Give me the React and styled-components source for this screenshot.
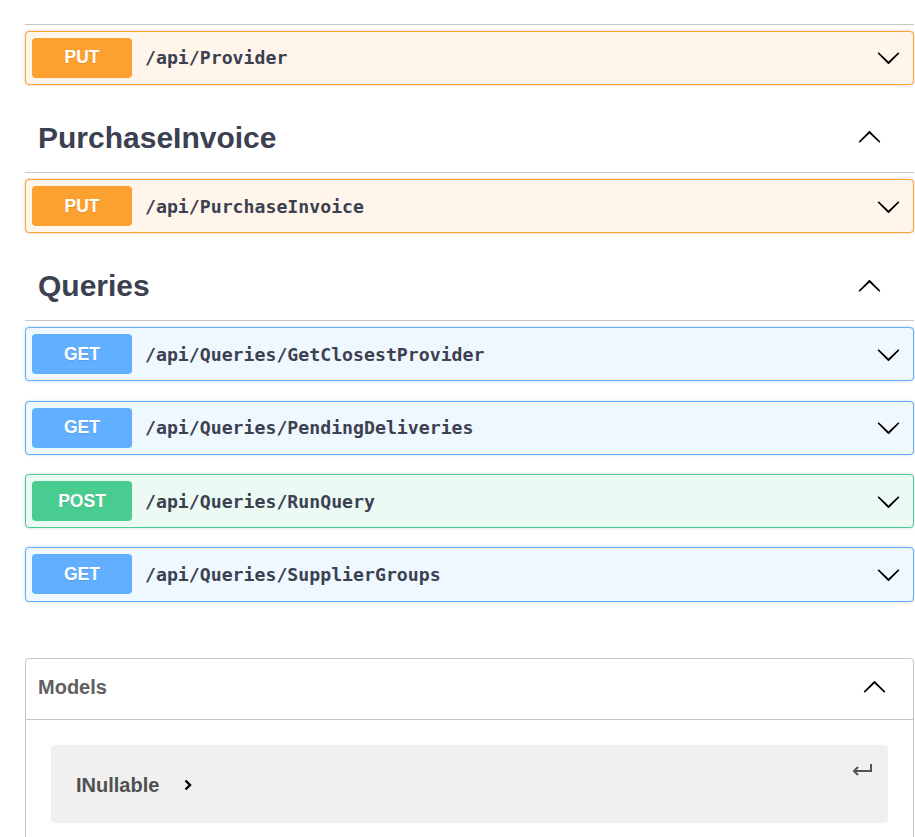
import React from 'react';
import styled, {createGlobalStyle} from 'styled-components';

const GlobalStyle = createGlobalStyle`
  html, body {
    margin: 0;
    padding: 0;
    background: #fff;
    overflow: hidden;
  }
  body {
    font-family: "Liberation Sans", Arial, sans-serif;
    color: #3b4151;
  }
`;

const methodColors = {
  PUT: {main: '#fca130', bg: '#fff5ea'},
  GET: {main: '#61affe', bg: '#eff7ff'},
  POST: {main: '#49cc90', bg: '#ecfaf4'},
};

const Page = styled.div`
  width: 889px;
  margin: -44px 0 0 25px;
`;

const TagSection = styled.section`
  display: flex;
  flex-direction: column;
`;

const TagHeading = styled.h3`
  display: flex;
  align-items: center;
  justify-content: space-between;
  box-sizing: border-box;
  height: 68.5px;
  margin: 0 0 6.3px;
  padding: 0 32px 0 13px;
  border-bottom: 1px solid rgba(59, 65, 81, 0.3);
  font-size: 30px;
  font-weight: 700;
  color: #3b4151;
`;

const Block = styled.div`
  display: flex;
  align-items: center;
  box-sizing: border-box;
  height: 54.3px;
  margin-bottom: 19.1px;
  padding: 0 12px 0 6px;
  border: 1px solid ${p => methodColors[p.$method].main};
  border-radius: 4px;
  background: ${p => methodColors[p.$method].bg};
  box-shadow: 0 0 3px rgba(0, 0, 0, 0.19);
`;

const Method = styled.span`
  display: flex;
  align-items: center;
  justify-content: center;
  width: 100px;
  height: 40px;
  border-radius: 4px;
  background: ${p => methodColors[p.$method].main};
  color: #fff;
  font-size: 17.5px;
  font-weight: 700;
  text-shadow: 0 1px 0 rgba(0, 0, 0, 0.1);
`;

const Path = styled.span`
  flex: 1;
  padding: 0 13px;
  font-family: "DejaVu Sans Mono", "Liberation Mono", monospace;
  font-size: 18.2px;
  font-weight: 700;
  color: #3b4151;
`;

const Models = styled.section`
  margin-top: 37px;
  border: 1px solid rgba(59, 65, 81, 0.3);
  border-radius: 4px;
  height: 200px;
`;

const ModelsHeader = styled.h4`
  display: flex;
  align-items: center;
  justify-content: space-between;
  box-sizing: border-box;
  height: 61px;
  margin: 0;
  padding: 0 26px 3px 12px;
  border-bottom: 1px solid rgba(59, 65, 81, 0.3);
  font-size: 20px;
  font-weight: 700;
  color: #606060;
`;

const ModelsBody = styled.div`
  padding: 25px 25px;
`;

const ModelBox = styled.div`
  display: flex;
  justify-content: space-between;
  box-sizing: border-box;
  height: 78px;
  padding: 0 15px 0 25px;
  border-radius: 4px;
  background: #f0f0f0;
`;

const ModelName = styled.span`
  display: flex;
  align-items: center;
  gap: 24px;
  padding-top: 3px;
  font-size: 20px;
  font-weight: 700;
  color: #505050;
`;

const ReturnIcon = styled.svg`
  margin-top: 19px;
`;

const Chevron = ({up, size = 25}) => (
  <svg width={size} height={size} viewBox="0 0 20 20" style={{transform: up ? 'rotate(180deg)' : 'none'}}>
    <path
      fill="#000"
      d="M17.418 6.109c.272-.268.709-.268.979 0s.271.701 0 .969l-7.908 7.83c-.27.268-.707.268-.979 0l-7.908-7.83c-.27-.268-.27-.701 0-.969.271-.268.709-.268.979 0L10 13.25l7.418-7.141z"
    />
  </svg>
);

const sections = [
  {name: 'Provider', ops: [['PUT', '/api/Provider']]},
  {name: 'PurchaseInvoice', ops: [['PUT', '/api/PurchaseInvoice']]},
  {
    name: 'Queries',
    ops: [
      ['GET', '/api/Queries/GetClosestProvider'],
      ['GET', '/api/Queries/PendingDeliveries'],
      ['POST', '/api/Queries/RunQuery'],
      ['GET', '/api/Queries/SupplierGroups'],
    ],
  },
];

const App = () => (
  <>
    <GlobalStyle />
    <Page>
      {sections.map(s => (
        <TagSection key={s.name}>
          <TagHeading>
            <span>{s.name}</span>
            <Chevron up size={25} />
          </TagHeading>
          {s.ops.map(([m, p]) => (
            <Block key={p} $method={m}>
              <Method $method={m}>{m}</Method>
              <Path>{p}</Path>
              <Chevron />
            </Block>
          ))}
        </TagSection>
      ))}
      <Models>
        <ModelsHeader>
          <span>Models</span>
          <Chevron up size={25} />
        </ModelsHeader>
        <ModelsBody>
          <ModelBox>
            <ModelName>
              INullable
              <svg width="10" height="14" viewBox="0 0 10 14">
                <path d="M2.5 2.5 L7 7 L2.5 11.5" fill="none" stroke="#000" strokeWidth="2.4" />
              </svg>
            </ModelName>
            <ReturnIcon width="22" height="12" viewBox="0 0 22 12">
              <path d="M20 0 V7 H3" fill="none" stroke="#555" strokeWidth="2" />
              <path d="M7 3 L3 7 L7 11" fill="none" stroke="#555" strokeWidth="2" />
            </ReturnIcon>
          </ModelBox>
        </ModelsBody>
      </Models>
    </Page>
  </>
);

export default App;
